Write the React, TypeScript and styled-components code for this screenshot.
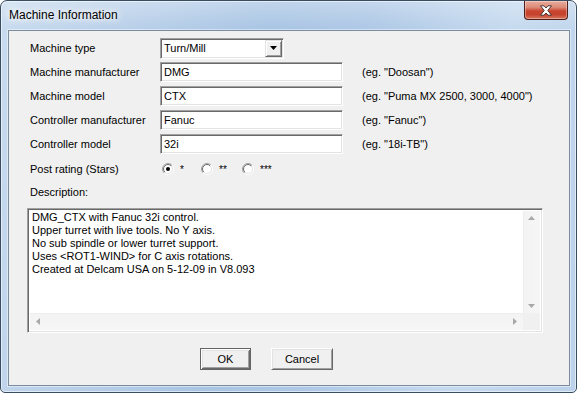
import React from "react";
import styled, { createGlobalStyle } from "styled-components";

const Global = createGlobalStyle`
  html, body { margin: 0; padding: 0; background: #ffffff; }
  body {
    width: 577px; height: 393px; overflow: hidden;
    font-family: "Liberation Sans", Arial, sans-serif;
    font-size: 11px; color: #000;
  }
  * { box-sizing: border-box; }
`;

const Window = styled.div`
  width: 577px;
  height: 393px;
  border: 1px solid #3a4c60;
  border-radius: 7px 7px 5px 5px;
  background:
    linear-gradient(180deg, rgba(255,255,255,0.28) 0px, rgba(255,255,255,0) 28px),
    linear-gradient(100deg, #c8dbef 0%, #b8cfe9 22%, #a9c5e4 42%, #aec8e6 58%, #c6daef 80%, #bcd2eb 100%);
  box-shadow: inset 0 0 0 1px rgba(255,255,255,0.55);
  display: flex;
  flex-direction: column;
  padding: 0 6px 6px 7px;
  overflow: hidden;
`;

const TitleBar = styled.div`
  height: 29px;
  display: flex;
  justify-content: space-between;
  align-items: flex-start;
`;

const Title = styled.div`
  font-family: "Liberation Sans", Arial, sans-serif;
  font-size: 12px;
  line-height: 29px;
  padding-left: 1px;
  color: #000;
  text-shadow: 0 0 8px #fff, 0 0 5px rgba(255,255,255,0.9), 0 0 12px rgba(255,255,255,0.8);
`;

const CloseButton = styled.div`
  width: 44px;
  height: 19px;
  margin-right: 2px;
  border: 1px solid #4e1f18;
  border-top: none;
  border-radius: 0 0 4px 4px;
  background: linear-gradient(180deg, #e9ab9c 0%, #dc8b79 35%, #c8462f 55%, #c5432c 75%, #d9765f 100%);
  box-shadow: inset 0 0 0 1px rgba(255,255,255,0.35);
  display: flex;
  align-items: center;
  justify-content: center;
`;

const Client = styled.div`
  flex: 1;
  border: 1px solid #7b8c9f;
  box-shadow: 0 0 0 1px rgba(255,255,255,0.45);
  background: #f0f0f0;
  padding: 5px 0 0 21px;
  display: flex;
  flex-direction: column;
`;

const FormGrid = styled.div`
  display: grid;
  grid-template-columns: 130px auto 1fr;
  grid-auto-rows: 24px;
  align-items: center;
`;

const Label = styled.div`
  line-height: 14px;
  white-space: nowrap;
`;

const Hint = styled.div`
  margin-left: 19px;
  white-space: nowrap;
`;

const sunken = `
  border: 1px solid;
  border-color: #a0a0a0 #ffffff #ffffff #a0a0a0;
  box-shadow: inset 1px 1px 0 #696969, inset -1px -1px 0 #e3e3e3;
`;

const TextInput = styled.div<{ $w: number }>`
  width: ${(p) => p.$w}px;
  height: 20px;
  ${sunken}
  background: #fff;
  padding: 0 0 0 3px;
  line-height: 18px;
  white-space: nowrap;
`;

const Combo = styled.div`
  width: 124px;
  height: 21px;
  ${sunken}
  background: #fff;
  display: flex;
  align-items: center;
  justify-content: space-between;
  padding: 1px 1px 1px 3px;
  grid-column: 2 / span 2;
`;

const ComboButton = styled.div`
  width: 17px;
  height: 17px;
  background: #f0f0f0;
  border: 1px solid;
  border-color: #e3e3e3 #696969 #696969 #e3e3e3;
  box-shadow: inset 1px 1px 0 #ffffff, inset -1px -1px 0 #a0a0a0;
  display: flex;
  align-items: center;
  justify-content: center;
`;

const RatingRow = styled.div`
  margin-top: 1px;
  height: 24px;
  display: grid;
  grid-template-columns: 132px auto;
  align-items: center;
`;

const RadioGroup = styled.div`
  display: flex;
  align-items: center;
`;

const RadioItem = styled.div<{ $w: number }>`
  width: ${(p) => p.$w}px;
  display: flex;
  align-items: center;
  gap: 6px;
  font-size: 10px;
`;

const DescLabel = styled.div`
  margin-top: 1px;
  line-height: 20px;
`;

const TextArea = styled.div`
  margin-top: 6px;
  margin-left: -3px;
  width: 516px;
  height: 125px;
  ${sunken}
  background: #fff;
  padding: 2px;
  display: grid;
  grid-template-columns: 1fr 17px;
  grid-template-rows: 1fr 17px;
`;

const TextContent = styled.div`
  padding-left: 2px;
  line-height: 13px;
  white-space: pre;
  overflow: hidden;
`;

const ScrollV = styled.div`
  background: linear-gradient(90deg, #e8e8e8 0, #f3f3f3 1px, #f6f6f6 100%);
  display: flex;
  flex-direction: column;
  justify-content: space-between;
  align-items: center;
  padding: 5px 0 5px;
`;

const ScrollH = styled.div`
  background: linear-gradient(180deg, #e8e8e8 0, #f3f3f3 1px, #f6f6f6 100%);
  display: flex;
  justify-content: space-between;
  align-items: center;
  padding: 0 6px 0 6px;
`;

const Corner = styled.div`
  background: #f0f0f0;
`;

const ButtonRow = styled.div`
  margin-top: 15px;
  padding-left: 170px;
  display: flex;
  gap: 20px;
`;

const PushButton = styled.div<{ $w: number; $default?: boolean }>`
  width: ${(p) => p.$w}px;
  height: 22px;
  background: #f0f0f0;
  border: 1px solid;
  border-color: ${(p) => (p.$default ? "#646464" : "#ffffff #696969 #696969 #ffffff")};
  box-shadow: ${(p) =>
    p.$default
      ? "inset 1px 1px 0 #ffffff, inset -1px -1px 0 #696969, inset 2px 2px 0 #e3e3e3, inset -2px -2px 0 #a0a0a0"
      : "inset 1px 1px 0 #e3e3e3, inset -1px -1px 0 #a0a0a0"};
  display: flex;
  align-items: center;
  justify-content: center;
  font-size: 11px;
`;

const CloseGlyph = () => (
  <svg width="14" height="11" viewBox="0 0 14 11">
    <path
      d="M1.5 0.8 H5 L7 3 L9 0.8 H12.5 L8.8 5.5 L12.5 10.2 H9 L7 8 L5 10.2 H1.5 L5.2 5.5 Z"
      fill="#ffffff"
      stroke="#3b2a28"
      strokeWidth="0.9"
      strokeLinejoin="round"
    />
  </svg>
);

const DownTri = ({ color = "#000" }: { color?: string }) => (
  <svg width="7" height="4" viewBox="0 0 7 4">
    <path d="M0 0 H7 L3.5 4 Z" fill={color} />
  </svg>
);

const Arrow = ({ dir }: { dir: "up" | "down" | "left" | "right" }) => {
  const d =
    dir === "up"
      ? "M0 4 L3.5 0 L7 4 Z"
      : dir === "down"
      ? "M0 0 H7 L3.5 4 Z"
      : dir === "left"
      ? "M4 0 V7 L0 3.5 Z"
      : "M0 0 V7 L4 3.5 Z";
  const vertical = dir === "up" || dir === "down";
  return (
    <svg width={vertical ? 7 : 4} height={vertical ? 4 : 7} viewBox={vertical ? "0 0 7 4" : "0 0 4 7"}>
      <path d={d} fill="#a8a8a8" />
    </svg>
  );
};

const Radio = ({ checked, id }: { checked?: boolean; id: string }) => (
  <svg width="12" height="12" viewBox="0 0 12 12">
    <defs>
      <linearGradient id={`o${id}`} x1="0" y1="0" x2="1" y2="1">
        <stop offset="0.5" stopColor="#a0a0a0" />
        <stop offset="0.5" stopColor="#ffffff" />
      </linearGradient>
      <linearGradient id={`i${id}`} x1="0" y1="0" x2="1" y2="1">
        <stop offset="0.5" stopColor="#696969" />
        <stop offset="0.5" stopColor="#e3e3e3" />
      </linearGradient>
    </defs>
    <circle cx="6" cy="6" r="5.5" fill="none" stroke={`url(#o${id})`} strokeWidth="1" />
    <circle cx="6" cy="6" r="4.5" fill="#ffffff" stroke={`url(#i${id})`} strokeWidth="1" />
    {checked && <circle cx="6" cy="6" r="2" fill="#000" />}
  </svg>
);

const rows = [
  { label: "Machine manufacturer", value: "DMG", hint: '(eg. "Doosan")' },
  { label: "Machine model", value: "CTX", hint: '(eg. "Puma MX 2500, 3000, 4000")' },
  { label: "Controller manufacturer", value: "Fanuc", hint: '(eg. "Fanuc")' },
  { label: "Controller model", value: "32i", hint: '(eg. "18i-TB")' },
];

const description = [
  "DMG_CTX with Fanuc 32i control.",
  "Upper turret with live tools. No Y axis.",
  "No sub spindle or lower turret support.",
  "Uses <ROT1-WIND> for C axis rotations.",
  "Created at Delcam USA on 5-12-09 in V8.093",
].join("\n");

export default function App() {
  return (
    <>
      <Global />
      <Window>
        <TitleBar>
          <Title>Machine Information</Title>
          <CloseButton>
            <CloseGlyph />
          </CloseButton>
        </TitleBar>
        <Client>
          <FormGrid>
            <Label>Machine type</Label>
            <Combo>
              <span>Turn/Mill</span>
              <ComboButton>
                <DownTri />
              </ComboButton>
            </Combo>
            {rows.map((r) => (
              <React.Fragment key={r.label}>
                <Label>{r.label}</Label>
                <TextInput $w={183}>{r.value}</TextInput>
                <Hint>{r.hint}</Hint>
              </React.Fragment>
            ))}
          </FormGrid>
          <RatingRow>
            <Label>Post rating (Stars)</Label>
            <RadioGroup>
              <RadioItem $w={39}>
                <Radio id="r1" checked />
                <span>*</span>
              </RadioItem>
              <RadioItem $w={41}>
                <Radio id="r2" />
                <span>**</span>
              </RadioItem>
              <RadioItem $w={40}>
                <Radio id="r3" />
                <span>***</span>
              </RadioItem>
            </RadioGroup>
          </RatingRow>
          <DescLabel>Description:</DescLabel>
          <TextArea>
            <TextContent>{description}</TextContent>
            <ScrollV>
              <Arrow dir="up" />
              <Arrow dir="down" />
            </ScrollV>
            <ScrollH>
              <Arrow dir="left" />
              <Arrow dir="right" />
            </ScrollH>
            <Corner />
          </TextArea>
          <ButtonRow>
            <PushButton $w={51} $default>
              OK
            </PushButton>
            <PushButton $w={62}>Cancel</PushButton>
          </ButtonRow>
        </Client>
      </Window>
    </>
  );
}
